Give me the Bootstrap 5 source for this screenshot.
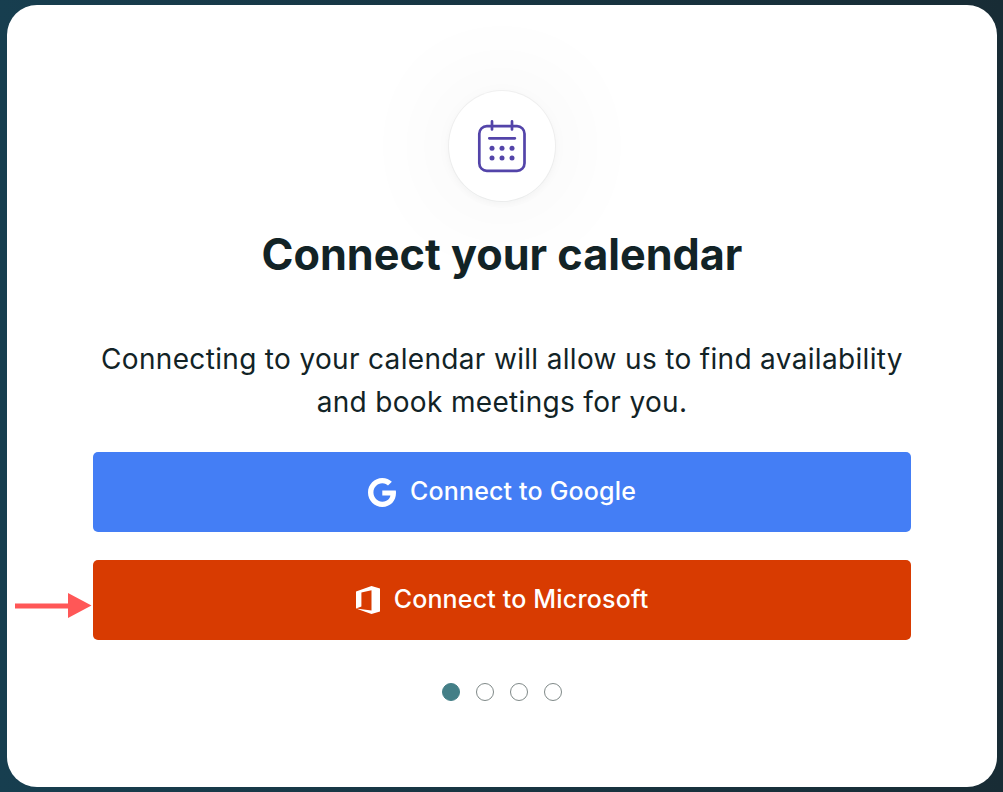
<!DOCTYPE html>
<html lang="en">
<head>
    <meta charset="UTF-8">
    <meta name="viewport" content="width=device-width, initial-scale=1.0">
    <title>Connect your calendar</title>
    <link rel="stylesheet" href="https://cdn.jsdelivr.net/npm/bootstrap@5.3.0/dist/css/bootstrap.min.css">
    <style>
        body {
            height: 100vh;
            padding: 5px 6px 5px 7px;
            background: linear-gradient(to right, #173e4f, #182c35);
            color: #122326;
            font-family: Inter, "Liberation Sans", sans-serif;
            overflow: hidden;
        }
        .connect-card {
            border-radius: 30px;
            padding: 86px 86px 0;
        }
        .calendar-circle {
            width: 106px;
            height: 110px;
            box-shadow: 0 0 0 1px rgba(18, 35, 38, .04), 0 2px 7px rgba(18, 35, 38, .045), 0 0 112px 3px rgba(0, 0, 0, .06);
        }
        .connect-title {
            margin: 26px 0 0;
            font-size: 43.2px;
            line-height: 54px;
            font-weight: 700;
        }
        .connect-text {
            margin: 57px -20px 28px;
            font-size: 28px;
            line-height: 43px;
            letter-spacing: .33px;
        }
        .connect-btn {
            height: 80px;
            gap: 14px;
            border: 0;
            border-radius: 5px;
            font-size: 25px;
            font-weight: 500;
            letter-spacing: .17px;
        }
        .btn-google,
        .btn-google:hover {
            background: #447ef5;
        }
        .btn-microsoft,
        .btn-microsoft:hover {
            background: #d83b01;
        }
        .button-stack {
            row-gap: 28px;
        }
        .step-dots {
            margin-top: 43px;
        }
        .step-dot {
            width: 18px;
            height: 18px;
            border: 1px solid #7f8988;
        }
        .step-dot.current {
            border-color: #447f87;
            background: #447f87;
        }
        .pointer-arrow {
            position: absolute;
            left: -78px;
            top: 33px;
        }
    </style>
</head>
<body>
    <main class="connect-card bg-white h-100 d-flex flex-column text-center">
        <div class="calendar-circle rounded-circle bg-white d-flex align-items-center justify-content-center align-self-center flex-shrink-0">
            <svg width="50" height="54" viewBox="0 0 50 54" fill="none" stroke="#5344a9" stroke-width="2.7" stroke-linecap="round">
                <rect x="2.3" y="7.2" width="45.2" height="44.6" rx="7.5"/>
                <path d="M15 2.4v8M35 2.4v8M12.3 19.3h25.6"/>
                <g fill="#5344a9" stroke="none">
                    <circle cx="15" cy="29.3" r="2.5"/>
                    <circle cx="25" cy="29.3" r="2.5"/>
                    <circle cx="35" cy="29.3" r="2.5"/>
                    <circle cx="15" cy="39.1" r="2.5"/>
                    <circle cx="25" cy="39.1" r="2.5"/>
                    <circle cx="35" cy="39.1" r="2.5"/>
                </g>
            </svg>
        </div>
        <h1 class="connect-title">Connect your calendar</h1>
        <p class="connect-text">Connecting to your calendar will allow us to find availability<br>and book meetings for you.</p>

        <div class="button-stack d-grid">
            <button type="button" class="btn connect-btn btn-google text-white d-flex align-items-center justify-content-center">
                <svg width="28" height="29" viewBox="0.24 0 23.52 24" preserveAspectRatio="none" fill="#fff">
                    <path d="M12.24 10.285V14.4h6.806c-.275 1.765-2.056 5.174-6.806 5.174-4.095 0-7.439-3.389-7.439-7.574s3.345-7.574 7.439-7.574c2.33 0 3.891.989 4.785 1.849l3.254-3.138C18.189 1.186 15.479 0 12.24 0c-6.635 0-12 5.365-12 12s5.365 12 12 12c6.926 0 11.52-4.869 11.52-11.726 0-.788-.085-1.39-.189-1.989z"/>
                </svg>
                <span>Connect to Google</span>
            </button>
            <div class="d-grid position-relative">
                <button type="button" class="btn connect-btn btn-microsoft text-white d-flex align-items-center justify-content-center">
                    <svg width="24" height="28" viewBox="0 0 24 28" fill="#fff">
                        <path d="M0 5.5 15.5 0 24 2.4v23.2L15.5 28 0 22.6l15.5 1.9V4.2L5.4 6.6v13.8L0 22.6z"/>
                    </svg>
                    <span>Connect to Microsoft</span>
                </button>
                <svg class="pointer-arrow" width="78" height="26" viewBox="0 0 78 26" fill="#ff5757">
                    <path d="M0 10.5h53V0l23.5 12.5L53 25V15.5H0z"/>
                </svg>
            </div>
        </div>

        <div class="step-dots d-flex justify-content-center gap-3">
            <span class="step-dot current rounded-circle"></span>
            <span class="step-dot rounded-circle"></span>
            <span class="step-dot rounded-circle"></span>
            <span class="step-dot rounded-circle"></span>
        </div>
    </main>
    <script src="https://cdn.jsdelivr.net/npm/bootstrap@5.3.0/dist/js/bootstrap.bundle.min.js"></script>
</body>
</html>
